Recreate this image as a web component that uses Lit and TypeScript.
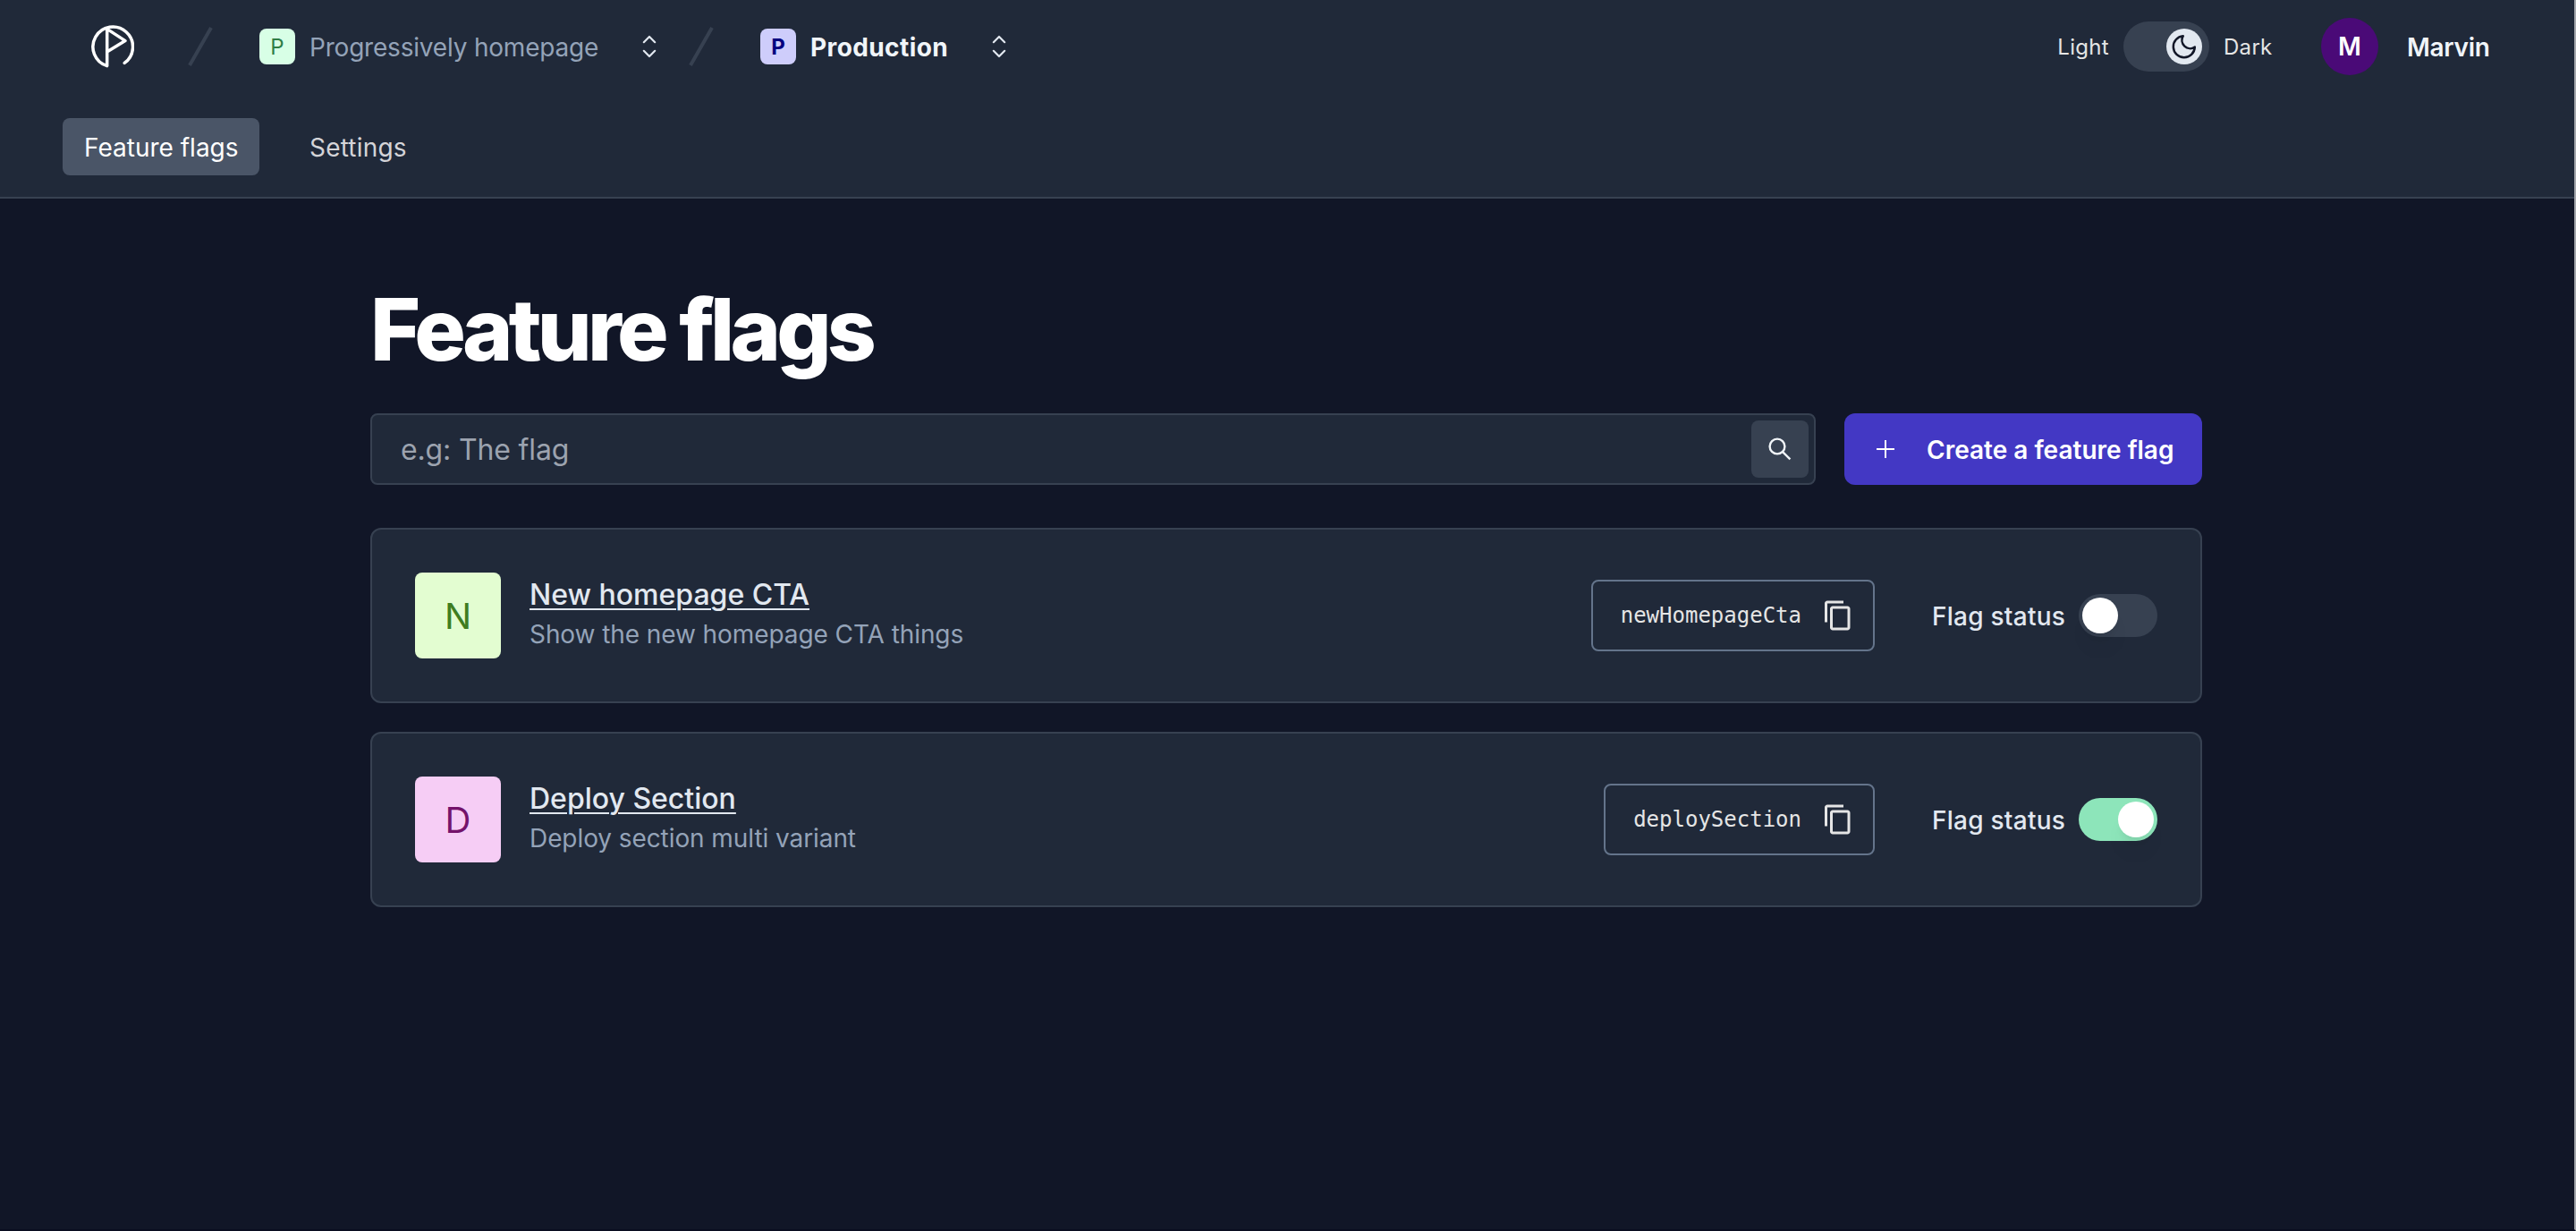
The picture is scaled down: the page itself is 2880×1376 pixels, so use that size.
import { LitElement, html, css } from 'lit';
import { customElement, property } from 'lit/decorators.js';
import { classMap } from 'lit/directives/class-map.js';

const flags = [
  {
    name: 'New homepage CTA',
    description: 'Show the new homepage CTA things',
    key: 'newHomepageCta',
    tone: 'lime',
    active: false,
  },
  {
    name: 'Deploy Section',
    description: 'Deploy section multi variant',
    key: 'deploySection',
    tone: 'pink',
    active: true,
  },
];

const logo = html`
  <svg width="48" height="48" viewBox="0 0 48 48" fill="none" stroke="#fff" stroke-width="3.5" stroke-linecap="round" stroke-linejoin="round">
    <path d="M37.2 42.4A22.3 22.3 0 1 0 17.7 45.6V4.4L38 17.6L18.4 29.6" />
  </svg>
`;

const slash = html`
  <svg width="28" height="46" viewBox="0 0 28 46" stroke="#374151" stroke-width="4">
    <path d="M2 44L26 2" />
  </svg>
`;

const selector = html`
  <svg width="20" height="28" viewBox="0 0 20 28" fill="none" stroke="#e2e8f0" stroke-width="2.2" stroke-linecap="round" stroke-linejoin="round">
    <path d="M3.8 9.2L10 3L16.2 9.2M3.8 18.8L10 25L16.2 18.8" />
  </svg>
`;

const moon = html`
  <svg width="40" height="40" viewBox="0 0 40 40" fill="none" stroke="#111627" stroke-width="2.5" stroke-linejoin="round">
    <path d="M18.8 8.2A12 12 0 1 0 31.8 20.6A9.2 9.2 0 0 1 18.8 8.2Z" />
  </svg>
`;

const search = html`
  <svg width="32" height="32" viewBox="0 0 32 32" fill="none" stroke="#f1f5f9" stroke-width="2.4">
    <circle cx="13" cy="13" r="8.4" />
    <path d="M18.8 18.8L27.4 27.4" />
  </svg>
`;

const plus = html`
  <svg width="20" height="20" viewBox="0 0 20 20" stroke="#fff" stroke-width="2">
    <path d="M0 10H20M10 0V20" />
  </svg>
`;

const copy = html`
  <svg width="36" height="36" viewBox="0 0 24 24" fill="#e5e5e5">
    <path d="M16 1H4c-1.1 0-2 .9-2 2v14h2V3h12V1zm3 4H8c-1.1 0-2 .9-2 2v14c0 1.1.9 2 2 2h11c1.1 0 2-.9 2-2V7c0-1.1-.9-2-2-2zm0 16H8V7h11v14z" />
  </svg>
`;

@customElement('flag-card')
class FlagCard extends LitElement {
  static styles = css`
    :host {
      display: block;
    }

    .card {
      align-items: center;
      background: #202939;
      border: 2px solid #374151;
      border-radius: 12px;
      box-sizing: border-box;
      display: flex;
      height: 196px;
      padding: 0 48px;
    }

    .tile {
      align-items: center;
      border-radius: 8px;
      display: flex;
      font-size: 40px;
      height: 96px;
      justify-content: center;
      width: 96px;
    }

    .lime {
      background: #e3fdd1;
      color: #3f7d20;
    }

    .pink {
      background: #f6cdf5;
      color: #74126a;
    }

    .text {
      flex: 1;
      line-height: 44px;
      padding: 0 0 2px 32px;
    }

    .name {
      color: #e2e8f0;
      font-size: 32px;
      font-weight: 500;
      text-decoration: underline;
      text-decoration-thickness: 2px;
      text-underline-offset: 4px;
    }

    .description {
      color: #94a3b8;
      font-size: 28px;
      letter-spacing: -0.08px;
    }

    .key {
      align-items: center;
      background: none;
      border: 2px solid #64748b;
      border-radius: 8px;
      box-sizing: border-box;
      color: #e5e5e5;
      display: flex;
      font-family: 'DejaVu Sans Mono', monospace;
      font-size: 24px;
      gap: 23px;
      height: 80px;
      margin-right: 64px;
      padding: 0 21px 0 31px;
    }

    .status {
      color: #e2e8f0;
      font-size: 28px;
      font-weight: 500;
      letter-spacing: 0.25px;
      padding-top: 1px;
      width: 164px;
    }

    .switch {
      background: #374151;
      border-radius: 24px;
      box-sizing: border-box;
      display: flex;
      height: 48px;
      padding: 4px;
      width: 88px;
    }

    .switch.on {
      background: #8de5ba;
      justify-content: flex-end;
    }

    .knob {
      background: #fff;
      border-radius: 50%;
      box-shadow: 0 20px 25px -5px rgba(0, 0, 0, 0.05), 0 8px 10px -6px rgba(0, 0, 0, 0.1);
      height: 40px;
      width: 40px;
    }
  `;

  @property({ type: Object }) flag: any;

  render() {
    const { name, description, key, tone, active } = this.flag;

    return html`
      <div class="card">
        <div class="tile ${tone}">${name[0]}</div>
        <div class="text">
          <div class="name">${name}</div>
          <div class="description">${description}</div>
        </div>
        <button class="key"><span>${key}</span>${copy}</button>
        <span class="status">Flag status</span>
        <div class=${classMap({ switch: true, on: active })}><div class="knob"></div></div>
      </div>
    `;
  }
}

@customElement('app-root')
class AppRoot extends LitElement {
  static styles = css`
    :host {
      background: #111627;
      border-bottom: 2px solid #0a0d20;
      border-right: 2px solid #a3a6ab;
      box-sizing: border-box;
      display: block;
      font-family: Inter, 'Liberation Sans', sans-serif;
      height: 1376px;
      white-space: nowrap;
    }

    svg {
      display: block;
      flex: none;
    }

    .header {
      background: #202939;
      border-bottom: 2px solid #374151;
      box-sizing: border-box;
      height: 222px;
    }

    .top {
      align-items: center;
      display: flex;
      height: 104px;
      padding: 0 94px 0 102px;
    }

    .slash {
      margin: 0 52px 0 60px;
    }

    .slash.second {
      margin-left: 34px;
    }

    .badge {
      align-items: center;
      border-radius: 8px;
      display: flex;
      font-size: 24px;
      height: 40px;
      justify-content: center;
      margin-right: 16px;
      width: 40px;
    }

    .project {
      background: #d8ffe6;
      color: #2f7d46;
    }

    .env {
      background: #cecdfb;
      color: #06007f;
      font-weight: 700;
    }

    .crumb {
      color: #94a3b8;
      font-size: 28px;
      letter-spacing: -0.2px;
      padding-top: 2px;
      width: 370px;
    }

    .crumb.current {
      color: #f1f5f9;
      font-weight: 700;
      letter-spacing: 0.4px;
      width: 201px;
    }

    .theme {
      align-items: center;
      color: #e5e5e5;
      display: flex;
      font-size: 24px;
      gap: 16px;
      letter-spacing: 0.3px;
      margin-left: auto;
    }

    .track {
      background: #374151;
      border-radius: 28px;
      box-sizing: border-box;
      display: flex;
      height: 56px;
      justify-content: flex-end;
      padding: 8px;
      width: 96px;
    }

    .thumb {
      background: #e2e8f0;
      border-radius: 50%;
      height: 40px;
      width: 40px;
    }

    .dark {
      width: 109px;
    }

    .avatar {
      align-items: center;
      background: #4a0a77;
      border-radius: 50%;
      color: #fff;
      display: flex;
      font-size: 28px;
      font-weight: 600;
      height: 64px;
      justify-content: center;
      margin-right: 32px;
      width: 64px;
    }

    .user {
      color: #f1f5f9;
      font-size: 28px;
      font-weight: 600;
      letter-spacing: -0.3px;
      padding-top: 2px;
      width: 93px;
    }

    .nav {
      display: flex;
      font-size: 28px;
      gap: 32px;
      line-height: 66px;
      padding: 28px 70px 0;
    }

    .tab {
      border-radius: 8px;
      box-sizing: border-box;
      color: #d4d4d8;
      height: 64px;
      letter-spacing: 0.2px;
      padding: 0 24px;
    }

    .tab.active {
      background: #4a5567;
      color: #fff;
      letter-spacing: 0;
      width: 220px;
    }

    .main {
      margin-left: 414px;
      padding-top: 94px;
      width: 2048px;
    }

    .title {
      color: #fff;
      font-size: 96px;
      font-weight: 800;
      letter-spacing: -4.7px;
      line-height: 104px;
      margin: 0 0 42px;
    }

    .tools {
      display: flex;
      gap: 32px;
      margin-bottom: 48px;
    }

    .search {
      align-items: center;
      background: #202939;
      border: 2px solid #374151;
      border-radius: 8px;
      box-sizing: border-box;
      color: #9ca3af;
      display: flex;
      flex: 1;
      font-size: 32px;
      height: 80px;
      justify-content: space-between;
      letter-spacing: -0.15px;
      padding: 0 6px 0 32px;
    }

    .find {
      align-items: center;
      background: #374151;
      border-radius: 8px;
      display: flex;
      height: 64px;
      justify-content: center;
      width: 64px;
    }

    .create {
      align-items: center;
      background: #4338c4;
      border-radius: 12px;
      box-sizing: border-box;
      color: #fff;
      display: flex;
      font-size: 28px;
      font-weight: 600;
      gap: 36px;
      padding-left: 36px;
      width: 400px;
    }

    .create span {
      padding-top: 2px;
    }

    .list {
      display: grid;
      gap: 32px;
    }
  `;

  render() {
    return html`
      <div class="header">
        <div class="top">
          ${logo}
          <div class="slash">${slash}</div>
          <div class="badge project">P</div>
          <span class="crumb">Progressively homepage</span>
          ${selector}
          <div class="slash second">${slash}</div>
          <div class="badge env">P</div>
          <span class="crumb current">Production</span>
          ${selector}
          <div class="theme">
            <span>Light</span>
            <div class="track"><div class="thumb">${moon}</div></div>
            <span class="dark">Dark</span>
          </div>
          <div class="avatar">M</div>
          <span class="user">Marvin</span>
        </div>
        <div class="nav">
          <div class="tab active">Feature flags</div>
          <div class="tab">Settings</div>
        </div>
      </div>
      <div class="main">
        <h1 class="title">Feature flags</h1>
        <div class="tools">
          <div class="search">
            <span>e.g: The flag</span>
            <div class="find">${search}</div>
          </div>
          <div class="create">${plus}<span>Create a feature flag</span></div>
        </div>
        <div class="list">
          ${flags.map(f => html`<flag-card .flag=${f}></flag-card>`)}
        </div>
      </div>
    `;
  }
}
